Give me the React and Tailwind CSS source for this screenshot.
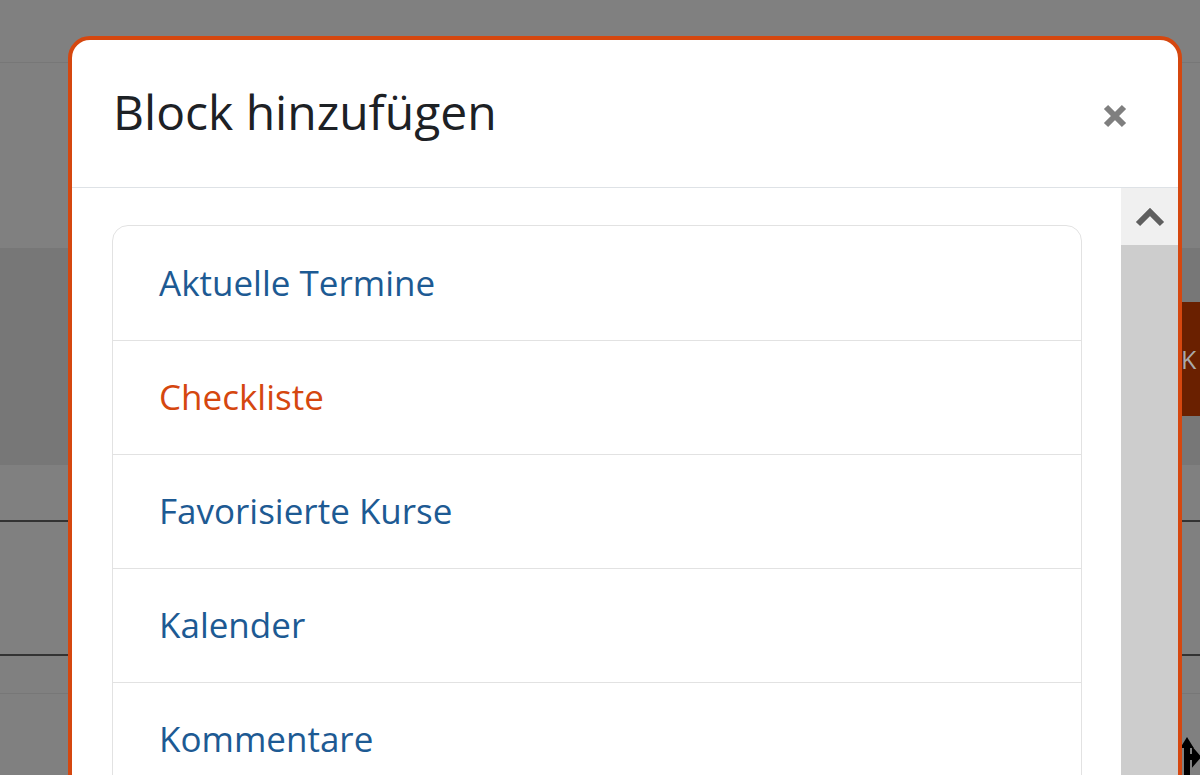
import React from "react";

const items = [
  { label: "Aktuelle Termine", active: false },
  { label: "Checkliste", active: true },
  { label: "Favorisierte Kurse", active: false },
  { label: "Kalender", active: false },
  { label: "Kommentare", active: false },
];

const App = () => {
  return (
    <div className="relative w-[1200px] h-[775px] overflow-hidden bg-[#808080] font-['Open_Sans',sans-serif]">
      {/* page behind the backdrop */}
      <div className="h-[63px] border-b border-[#777777]" />
      <div className="h-[185px]" />
      <div className="h-[217px] bg-[#777777] flex flex-col">
        <div className="h-[54px]" />
        <div className="flex justify-end">
          <div className="w-[19px] h-[114px] bg-[#6a2000] text-[#a9a9a9] text-[25px] leading-[114px]">
            K
          </div>
        </div>
      </div>
      <div className="h-[57px] border-b-2 border-[#333333]" />
      <div className="h-[134px] border-b-2 border-[#333333]" />
      <div className="h-[38px] border-b border-[#777777]" />
      <div className="flex justify-end pt-[42px]">
        <svg width="19" height="42" viewBox="0 0 19 42" className="text-black">
          <path d="M1 11 L6 3 L11 11 Z" fill="currentColor" stroke="currentColor" strokeWidth="2" />
          <path d="M6 8 V42" stroke="currentColor" strokeWidth="6" />
          <path d="M6 21 H16" stroke="currentColor" strokeWidth="6" />
          <path d="M12 13 L19 21 L12 29 Z" fill="currentColor" stroke="currentColor" strokeWidth="2" />
        </svg>
      </div>

      {/* modal */}
      <div className="absolute left-[68px] top-[36px] w-[1114px] h-[820px] bg-white border-4 border-[#d5470f] rounded-[22px] overflow-hidden flex flex-col">
        <div className="h-[148px] shrink-0 flex items-center justify-between pl-[41px] pr-[48px] border-b border-[#dee2e6]">
          <h1 className="text-[48px] text-[#1d2125] font-normal leading-none pb-[4px]">
            Block hinzufügen
          </h1>
          <button className="w-[30px] h-[30px] flex items-center justify-center mt-[4px]">
            <svg width="26" height="26" viewBox="0 0 26 26">
              <path d="M4 4 L22 22 M22 4 L4 22" stroke="#7f7f7f" strokeWidth="6" />
            </svg>
          </button>
        </div>
        <div className="flex flex-1">
          <div className="flex-1 pt-[37px] pl-[40px] pr-[39px]">
            <div className="border-[1.5px] border-[#e2e2e2] rounded-[16px] overflow-hidden">
              {items.map((item, i) => (
                <div
                  key={item.label}
                  className={
                    "h-[114px] flex items-center pl-[46px] text-[35px] " +
                    (i > 0 ? "border-t-[1.5px] border-[#e2e2e2] " : "") +
                    (item.active ? "text-[#d5470f]" : "text-[#1d5a93]")
                  }
                >
                  {item.label}
                </div>
              ))}
            </div>
          </div>
          <div className="w-[57px] flex flex-col">
            <div className="h-[57px] bg-[#f0f0f0] flex items-center justify-center">
              <svg width="30" height="20" viewBox="0 0 30 20">
                <path d="M3 17 L15 5 L27 17" stroke="#5f5f5f" strokeWidth="6" fill="none" />
              </svg>
            </div>
            <div className="flex-1 bg-[#cdcdcd]" />
          </div>
        </div>
      </div>
    </div>
  );
};

export default App;
